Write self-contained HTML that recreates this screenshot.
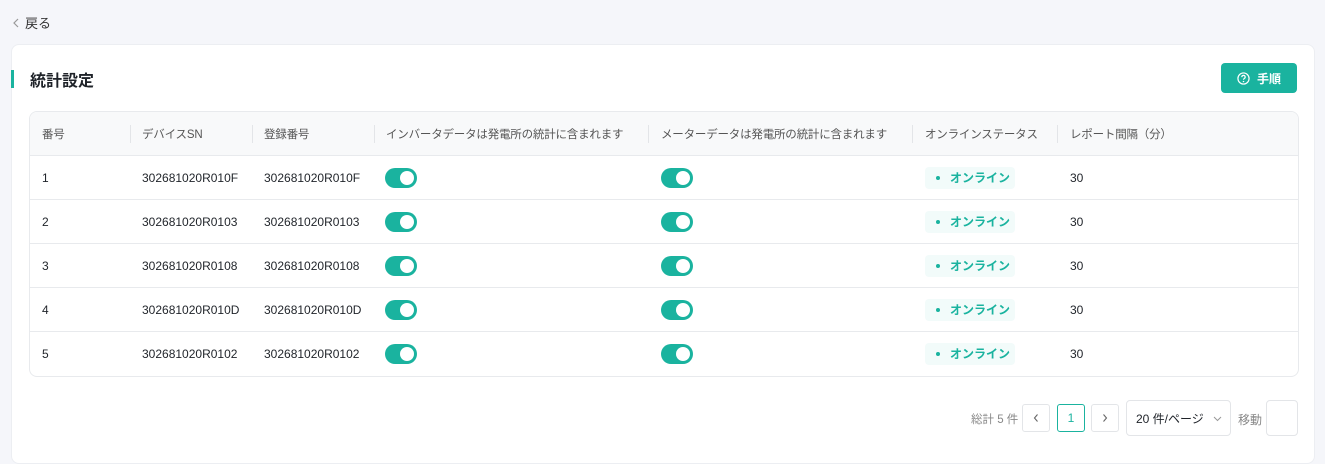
<!DOCTYPE html>
<html><head><meta charset="utf-8"><style>
*{box-sizing:border-box;margin:0;padding:0}
body{width:1325px;height:451px;overflow:hidden;background:#f5f6fa;font-family:"Liberation Sans","Noto Sans CJK JP",sans-serif;color:#1f2329;position:relative}
.back{position:absolute;left:12px;top:13px;font-size:13px;color:#333;display:flex;align-items:center;gap:5px}
.card{position:absolute;left:11px;top:44px;width:1304px;height:420px;background:#fff;border:1px solid #eceef2;border-radius:8px}
.bar{position:absolute;left:-1px;top:25px;width:3px;height:18px;background:#1ab39f}
.title{position:absolute;left:18px;top:22px;font-size:16px;font-weight:bold;color:#1f2329}
.btn{position:absolute;left:1209px;top:18px;width:76px;height:30px;background:#1ab39f;border-radius:4px;color:#fff;font-size:12px;font-weight:bold;display:flex;align-items:center;justify-content:center;gap:7px}
.tbl{position:absolute;left:17px;top:66px;width:1270px;height:266px;border:1px solid #e8eaed;border-radius:8px;overflow:hidden}
.row{position:absolute;left:0;width:100%;height:44px;border-bottom:1px solid #e8eaed;font-size:12px}
.row.h{background:#f8f9fa;color:#555;top:0;font-size:11.5px;letter-spacing:-0.2px}
.row span{position:absolute;top:50%;transform:translateY(-50%);white-space:nowrap}
.sep{position:absolute;top:13px;width:1px;height:18px;background:#e3e5e8}
.tg{position:absolute;top:12px;width:32px;height:20px;border-radius:10px;background:#1ab39f}
.tg:after{content:"";position:absolute;right:3px;top:3px;width:14px;height:14px;border-radius:50%;background:#fff}
.pill{position:absolute;left:895px;top:11px;width:90px;height:22px;background:#f2fbfa;border-radius:4px;color:#1ab39f;font-weight:600;font-size:12px}
.pill:before{content:"";position:absolute;left:11px;top:9px;width:4px;height:4px;border-radius:50%;background:#1ab39f}
.pill b{position:absolute;left:25px;top:2px;font-weight:600}
.pg{position:absolute;font-size:12px;color:#888}
.box{position:absolute;border:1px solid #e3e5e8;border-radius:3px;background:#fff;display:flex;align-items:center;justify-content:center;font-size:12px}
</style></head><body>
<div class="back"><svg width="8" height="10" viewBox="0 0 8 10"><path d="M6 1L2 5l4 4" fill="none" stroke="#999" stroke-width="1.2"/></svg>戻る</div>
<div class="card">
<div class="bar"></div><div class="title">統計設定</div>
<div class="btn"><svg width="13" height="13" viewBox="0 0 14 14"><circle cx="7" cy="7" r="6" fill="none" stroke="#fff" stroke-width="1.3"/><path d="M5.2 5.5a1.8 1.8 0 1 1 2.5 1.6c-.5.3-.7.6-.7 1.2" fill="none" stroke="#fff" stroke-width="1.3"/><circle cx="7" cy="10.3" r=".8" fill="#fff"/></svg>手順</div>
<div class="tbl">
<div class="row h"><span style="left:12px">番号</span><div class="sep" style="left:100px"></div><span style="left:112px">デバイスSN</span><div class="sep" style="left:222px"></div><span style="left:234px">登録番号</span><div class="sep" style="left:344px"></div><span style="left:356px">インバータデータは発電所の統計に含まれます</span><div class="sep" style="left:618px"></div><span style="left:631px">メーターデータは発電所の統計に含まれます</span><div class="sep" style="left:882px"></div><span style="left:895px">オンラインステータス</span><div class="sep" style="left:1027px"></div><span style="left:1040px">レポート間隔（分）</span></div>
<div class="row" style="top:44px"><span style="left:12px">1</span><span style="left:112px">302681020R010F</span><span style="left:234px">302681020R010F</span><div class="tg" style="left:355px"></div><div class="tg" style="left:631px"></div><div class="pill"><b>オンライン</b></div><span style="left:1040px">30</span></div>
<div class="row" style="top:88px"><span style="left:12px">2</span><span style="left:112px">302681020R0103</span><span style="left:234px">302681020R0103</span><div class="tg" style="left:355px"></div><div class="tg" style="left:631px"></div><div class="pill"><b>オンライン</b></div><span style="left:1040px">30</span></div>
<div class="row" style="top:132px"><span style="left:12px">3</span><span style="left:112px">302681020R0108</span><span style="left:234px">302681020R0108</span><div class="tg" style="left:355px"></div><div class="tg" style="left:631px"></div><div class="pill"><b>オンライン</b></div><span style="left:1040px">30</span></div>
<div class="row" style="top:176px"><span style="left:12px">4</span><span style="left:112px">302681020R010D</span><span style="left:234px">302681020R010D</span><div class="tg" style="left:355px"></div><div class="tg" style="left:631px"></div><div class="pill"><b>オンライン</b></div><span style="left:1040px">30</span></div>
<div class="row" style="top:220px;border-bottom:none"><span style="left:12px">5</span><span style="left:112px">302681020R0102</span><span style="left:234px">302681020R0102</span><div class="tg" style="left:355px"></div><div class="tg" style="left:631px"></div><div class="pill"><b>オンライン</b></div><span style="left:1040px">30</span></div>
</div>
<div class="pg" style="left:959px;top:366px;font-size:11.5px">総計 5 件</div>
<div class="box" style="left:1010px;top:359px;width:28px;height:28px"><svg width="8" height="10" viewBox="0 0 8 10"><path d="M5.5 1.5L2.5 5l3 3.5" fill="none" stroke="#666" stroke-width="1.1"/></svg></div>
<div class="box" style="left:1045px;top:359px;width:28px;height:28px;border-color:#1ab39f;color:#1ab39f">1</div>
<div class="box" style="left:1079px;top:359px;width:28px;height:28px"><svg width="8" height="10" viewBox="0 0 8 10"><path d="M2.5 1.5L5.5 5l-3 3.5" fill="none" stroke="#666" stroke-width="1.1"/></svg></div>
<div class="box" style="left:1114px;top:355px;width:105px;height:36px;border-radius:4px;justify-content:flex-start;padding-left:9px;color:#1f2329">20 件/ページ<svg style="position:absolute;right:8px;top:15px" width="9" height="6" viewBox="0 0 9 6"><path d="M1 1l3.5 3.5L8 1" fill="none" stroke="#999" stroke-width="1"/></svg></div>
<div class="pg" style="left:1226px;top:366px">移動</div>
<div class="box" style="left:1254px;top:355px;width:32px;height:36px;border-radius:4px"></div>
</div>
</body></html>
